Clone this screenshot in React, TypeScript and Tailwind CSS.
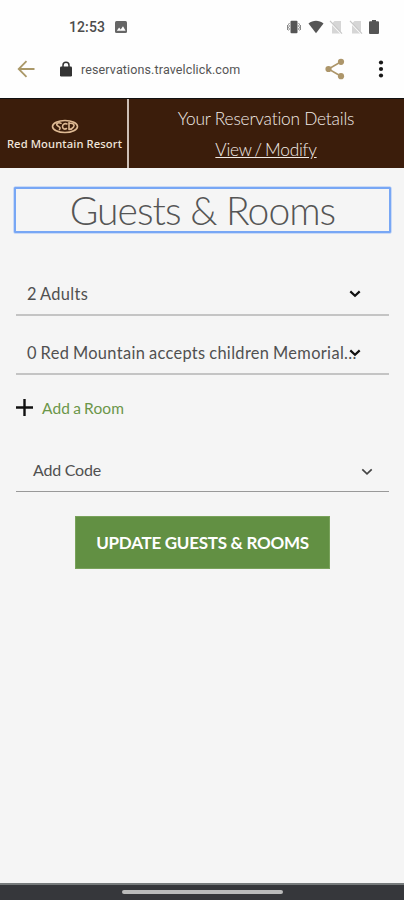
import React from "react";

function Chevron({ className }: { className: string }) {
  return (
    <svg viewBox="0 0 12 8" className={className} fill="none" stroke="currentColor">
      <path d="M1.3 1.4 6 5.8 10.7 1.4" />
    </svg>
  );
}

function NoSim() {
  return (
    <svg viewBox="0 0 14 14" className="h-[14px] w-[14px]">
      <path d="M5.500 1H12v12.500H3V3.500z" fill="#d6d6d6" />
      <path d="M0 1 12.500 14" stroke="#fefefe" strokeWidth="1.500" />
      <path d="M1 .8 13 13.600" stroke="#c6c6c6" strokeWidth="1.200" />
    </svg>
  );
}

function StatusBar() {
  return (
    <div className="flex h-[52px] items-center pl-[69px] pt-px text-[#4c4c4c]">
      <span className="w-[37px] whitespace-nowrap font-['Roboto',sans-serif] text-[14px] font-medium leading-none tracking-[0.100px]">12:53</span>
      <svg viewBox="0 0 12 12" className="ml-[9px] h-[12px] w-[12px]">
        <rect width="12" height="12" rx="1.5" fill="#666" />
        <path d="m1.8 9.7 2.3-3.2 1.6 2L8 5.3l2.6 4.4z" fill="#fff" />
      </svg>
      <div className="ml-[160px] flex items-center">
        <svg viewBox="0 0 14 14" className="h-[14px] w-[14px]" fill="none" stroke="#555">
          <rect x="3.5" y=".8" width="7" height="12.4" rx="1" fill="#555" stroke="none" />
          <path d="m2.5 3-1 1.5 1 1.5-1 1.5 1 1.5-1 1.5M11.5 3l1 1.5-1 1.5 1 1.5-1 1.5 1 1.5M.5 5v5M13.5 5v5" strokeWidth=".7" />
        </svg>
        <svg viewBox="0 0 16 14" className="ml-[7px] h-[14px] w-[16px]" fill="#555">
          <path d="M.5 3.4C5-.1 11-.1 15.5 3.4L8 13.2z" />
        </svg>
        <div className="ml-[5px] flex gap-[6px]">
          <NoSim />
          <NoSim />
        </div>
        <svg viewBox="0 0 10 14" className="ml-[6px] h-[14px] w-[10px]" fill="#555">
          <path d="M3 0h4v1.2h2a1 1 0 0 1 1 1V13a1 1 0 0 1-1 1H1a1 1 0 0 1-1-1V2.200a1 1 0 0 1 1-1h2z" />
        </svg>
      </div>
    </div>
  );
}

function AddressBar() {
  return (
    <div className="flex h-[46px] items-center pb-[12px] pl-[17px]">
      <svg viewBox="0 0 18 18" className="h-[18px] w-[18px]" fill="none" stroke="#aa9868" strokeWidth="1.8">
        <path d="M17.500 9H2M9.500 1.200 1.700 9l7.800 7.800" />
      </svg>
      <svg viewBox="0 0 12 16" className="ml-[25px] h-[16px] w-[12px]">
        <path d="M3 7V4.200a3 3 0 0 1 6 0V7" fill="none" stroke="#333" strokeWidth="1.500" />
        <rect y="5.500" width="12" height="10" rx="1.200" fill="#333" />
      </svg>
      <span className="ml-[9px] w-[160px] whitespace-nowrap pt-[2px] font-['Roboto',sans-serif] text-[12.500px] leading-none tracking-[0.130px] text-[#555]">reservations.travelclick.com</span>
      <svg viewBox="0 0 20 22" className="ml-[84px] h-[22px] w-[20px]" fill="#ad966a">
        <path d="M16 3.800 3.500 11 16 18.200" fill="none" stroke="#ad966a" strokeWidth="1.600" />
        <circle cx="16" cy="3.800" r="3.100" />
        <circle cx="3.500" cy="11" r="3.100" />
        <circle cx="16" cy="18.200" r="3.100" />
      </svg>
      <svg viewBox="0 0 6 18" className="ml-[33px] h-[18px] w-[6px]" fill="#181818">
        <circle cx="3" cy="2.500" r="2.100" />
        <circle cx="3" cy="9" r="2.100" />
        <circle cx="3" cy="15.500" r="2.100" />
      </svg>
    </div>
  );
}

function SiteHeader() {
  return (
    <header className="flex h-[70px] border-t border-[#111] bg-[#3b1d0b]">
      <div className="flex w-[129px] shrink-0 flex-col items-center border-r-2 border-[#cdbfb6] pl-[2px] pt-[20px] text-[#f1e6dc]">
        <svg viewBox="0 0 28 15" className="h-[15px] w-[28px]" fill="none" stroke="#deb993" strokeWidth="1.600" strokeLinecap="round">
          <ellipse cx="14" cy="7.500" rx="12.500" ry="6" />
          <path d="M10 4.200C6.500 3 4.500 5 6.500 6.700s3.500 1.800 2 3.800M16 5c-2.500-1.200-4.500.5-4.500 2.500s2 3.500 4 2M18 3.500v7M18 4.500c4.500-.8 6 1.500 4.500 3.500-1 1.500-2.500 2.500-4.500 2.500" />
        </svg>
        <span className="mt-[3px] whitespace-nowrap font-['Noto_Sans',sans-serif] text-[11.200px] font-medium leading-[13px] tracking-[0.120px]">Red Mountain Resort</span>
      </div>
      <div className="flex flex-1 flex-col items-center pt-[8px] pr-px font-['Lato',sans-serif] font-light text-[#f2ece8]">
        <span className="text-[17.300px] leading-[24px] tracking-[-0.200px]">Your Reservation Details</span>
        <a className="mt-[7px] text-[17.300px] leading-[24px] tracking-[-0.230px] underline [word-spacing:-1.300px]">View / Modify</a>
      </div>
    </header>
  );
}

function SelectRow({ label }: { label: string }) {
  return (
    <div className="mx-4 flex h-[59px] w-[373px] items-center border-b-2 border-[#c4c4c4] pl-[11px] pt-[17px] text-[#505050]">
      <span className="w-[330px] whitespace-nowrap text-[16.400px] leading-[22px] tracking-[0.340px] [word-spacing:-0.800px]">{label}</span>
      <Chevron className="-ml-[8px] h-[8px] w-[12px] shrink-0 stroke-[2.200px] text-[#111]" />
    </div>
  );
}

export default function App() {
  return (
    <div className="flex h-[900px] w-[404px] flex-col overflow-hidden bg-[#f5f5f5] font-['Lato',sans-serif]">
      <div className="bg-[#fefefe]">
        <StatusBar />
        <AddressBar />
      </div>
      <SiteHeader />
      <main className="flex flex-1 flex-col">
        <h1 className="ml-[14px] mt-[19px] flex h-[46px] w-[377px] items-center justify-center rounded-[1px] border-2 border-[#78a7f5] text-[39px] font-light leading-none tracking-[-0.960px] text-[#555] shadow-[0_0_0_0.500px_#9fc0f8]">
          Guests &amp; Rooms
        </h1>
        <div className="mt-[24px]">
          <SelectRow label="2 Adults" />
          <SelectRow label="0 Red Mountain accepts children Memorial..." />
        </div>
        <div className="mt-[21px] flex h-[22px] items-center pl-4">
          <svg viewBox="0 0 17 17" className="h-[17px] w-[17px]" stroke="#111" strokeWidth="2.400">
            <path d="M8.500 0v17M0 8.500h17" />
          </svg>
          <span className="ml-[9px] pt-[4px] text-[15.500px] tracking-[0.100px] text-[#6b9649] [word-spacing:-0.900px]">Add a Room</span>
        </div>
        <div className="mx-4 mt-[29px] flex h-[45px] w-[373px] items-center border-b border-[#999] pl-[17px] text-[#505050]">
          <span className="w-[328px] pt-px text-[16px] tracking-[-0.220px]">Add Code</span>
          <Chevron className="mt-[5px] h-[8px] w-[12px] shrink-0 stroke-[1.700px] text-[#444]" />
        </div>
        <button className="ml-[75px] mt-[24px] flex h-[53px] w-[255px] items-center justify-center border border-[#79a25b] bg-[#629043] text-[17px] font-bold tracking-[-0.270px] text-white">
          UPDATE GUESTS &amp; ROOMS
        </button>
      </main>
      <div className="flex h-[17px] shrink-0 justify-center border-t-2 border-[#777b7c] bg-[#36373b] pt-[5px]">
        <div className="h-[4px] w-[161px] rounded-full bg-[#bbb]" />
      </div>
    </div>
  );
}
